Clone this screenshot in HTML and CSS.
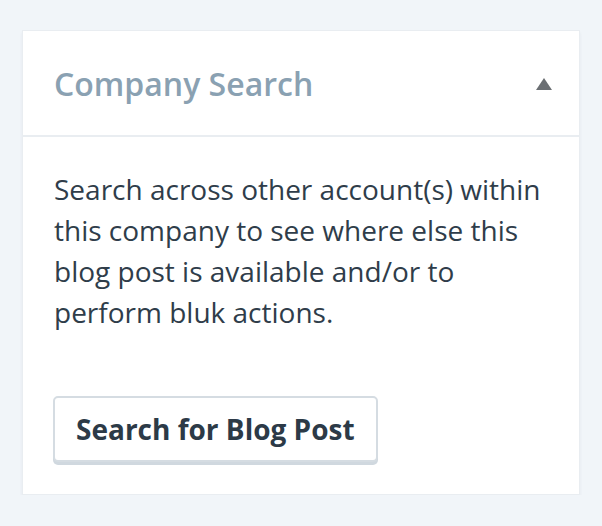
FILE: index.html
```html
<!DOCTYPE html>
<html>
<head>
<meta charset="utf-8">
<link rel="stylesheet" href="styles.css">
</head>
<body>
<div class="card">
  <div class="card-header">
    <h2 class="card-title">Company Search</h2>
    <svg class="caret" width="16" height="12" viewBox="0 0 16 12"><polygon points="8,0 16,12 0,12" fill="#6b6f73"/></svg>
  </div>
  <div class="card-body">
    <p class="desc">Search across other account(s) within this company to see where else this blog post is available and/or to perform bluk actions.</p>
    <button class="btn">Search for Blog Post</button>
  </div>
</div>
</body>
</html>
```
FILE: styles.css
```css
html, body {
  margin: 0;
  padding: 0;
}
body {
  background: #f1f5f9;
  font-family: "Open Sans", "Liberation Sans", sans-serif;
  padding: 30px 22px 0 22px;
}
.card {
  background: #ffffff;
  border: 1px solid #e9edf1;
  box-shadow: 0 3px 3px rgba(40, 60, 80, 0.07);
  width: 556px;
}
.card-header {
  height: 104px;
  display: flex;
  align-items: center;
  justify-content: space-between;
  padding: 0 27px 0 31px;
  border-bottom: 2px solid #e9edf1;
}
.card-title {
  margin: 0;
  font-size: 32px;
  font-weight: 600;
  color: #8aa1b2;
}
.caret {
  display: block;
  margin-top: 2px;
}
.card-body {
  padding: 32px 31px 32px 30px;
}
.desc {
  margin: 0 0 63px 1px;
  font-size: 28px;
  line-height: 41px;
  color: #2f3d4a;
}
.btn {
  display: block;
  font-family: "Open Sans", "Liberation Sans", sans-serif;
  font-size: 28px;
  font-weight: 700;
  color: #2c3a47;
  background: #ffffff;
  border: 2px solid #d5dce2;
  border-radius: 5px;
  box-shadow: 0 3px 0 #d0d8df;
  padding: 0 21px;
  height: 66px;
  cursor: pointer;
}
```
